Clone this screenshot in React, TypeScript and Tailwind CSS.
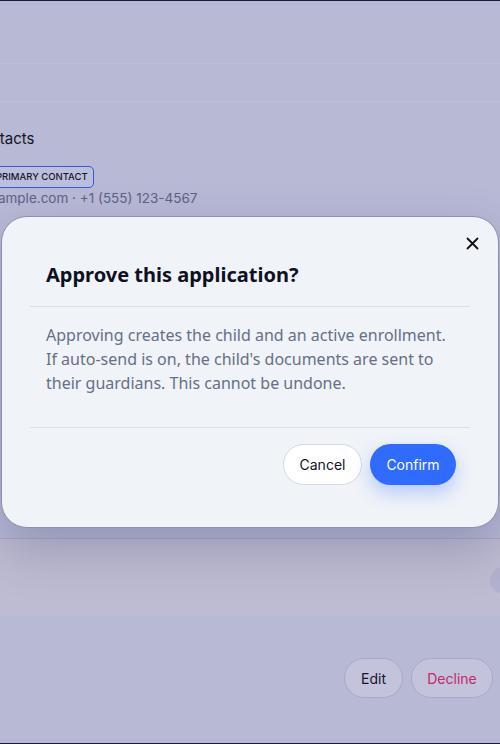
import React from "react";

export default function App() {
  return (
    <div className="relative w-[500px] h-[744px] overflow-hidden bg-[#b7b9d5] border-y border-[#1c1a3b] font-['Inter',sans-serif]">
      {/* background page (dimmed) */}
      <div className="flex flex-col">
        <div className="h-[62px]" />
        <div className="h-[38px] border-t border-[#bec0da]" />
        <div className="border-t border-[#bec0da] flex flex-col">
          <div className="pt-[26px] -ml-[29px] text-[15px] leading-[22px] text-[#14142a]">Contacts</div>
          <div className="mt-[16px] -ml-[10px] flex">
            <span className="h-[22px] px-[5px] flex items-center rounded-[5px] border border-[#3458e0] bg-[#bcbedc] text-[9.5px] font-medium text-[#16162c]">
              PRIMARY CONTACT
            </span>
          </div>
          <div className="mt-0 -ml-[17px] text-[13.5px] leading-[20px] text-[#5d6287] whitespace-nowrap">
            example.com · +1 (555) 123-4567
          </div>
        </div>
        <div className="h-[330px]" />
        <div className="h-[78px] border-t border-[#a9a9c5] bg-[#bebcd2] flex items-center justify-end">
          <div className="w-[27px] h-[27px] -mr-[17px] mt-[6px] rounded-full bg-[#b2b2cf]" />
        </div>
        <div className="flex justify-end gap-2 pt-[42px] pr-[7px]">
          <div className="h-[40px] w-[59px] rounded-full border border-[#a8a9c7] bg-[#c3c3dc] flex items-center justify-center text-[14px] text-[#16162a]">
            Edit
          </div>
          <div className="h-[40px] w-[82px] rounded-full border border-[#a8a9c7] bg-[#c3c3dc] flex items-center justify-center text-[14px] text-[#c22a6c]">
            Decline
          </div>
        </div>
      </div>

      {/* modal */}
      <div className="absolute left-[1px] top-[215px] w-[498px] h-[312px] rounded-[26px] border border-[#8e8fae] bg-[#f0f3f8] shadow-[0_20px_50px_rgba(40,40,90,0.25)] px-[28px] flex flex-col">
        <button className="absolute right-[18px] top-[18px] w-[16px] h-[16px] flex items-center justify-center text-[#111]">
          <svg width="13" height="13" viewBox="0 0 13 13" fill="none" stroke="currentColor" strokeWidth="1.8" strokeLinecap="round">
            <path d="M1.5 1.5L11.5 11.5M11.5 1.5L1.5 11.5" />
          </svg>
        </button>
        <div className="pt-[44px] pb-[17px] px-[16px] border-b border-[#dcdfe6]">
          <h2 className="text-[20px] leading-[28px] font-bold text-[#0e1122] font-['Noto_Sans',sans-serif]">
            Approve this application?
          </h2>
        </div>
        <div className="pt-[16px] pb-[32px] px-[16px] border-b border-[#dcdfe6]">
          <p className="text-[16px] leading-[24px] text-[#667085] font-['Noto_Sans',sans-serif]">
            Approving creates the child and an active enrollment. If auto-send is on, the child's documents are sent to their guardians. This cannot be undone.
          </p>
        </div>
        <div className="pt-[16px] pr-[14px] flex justify-end gap-2">
          <button className="h-[41px] w-[79px] rounded-full border border-[#d4d7e2] bg-white text-[14px] text-[#111322]">
            Cancel
          </button>
          <button className="h-[41px] w-[86px] rounded-full bg-[#2f6bff] text-[14px] text-white shadow-[0_8px_18px_rgba(47,107,255,0.3)]">
            Confirm
          </button>
        </div>
      </div>
    </div>
  );
}
